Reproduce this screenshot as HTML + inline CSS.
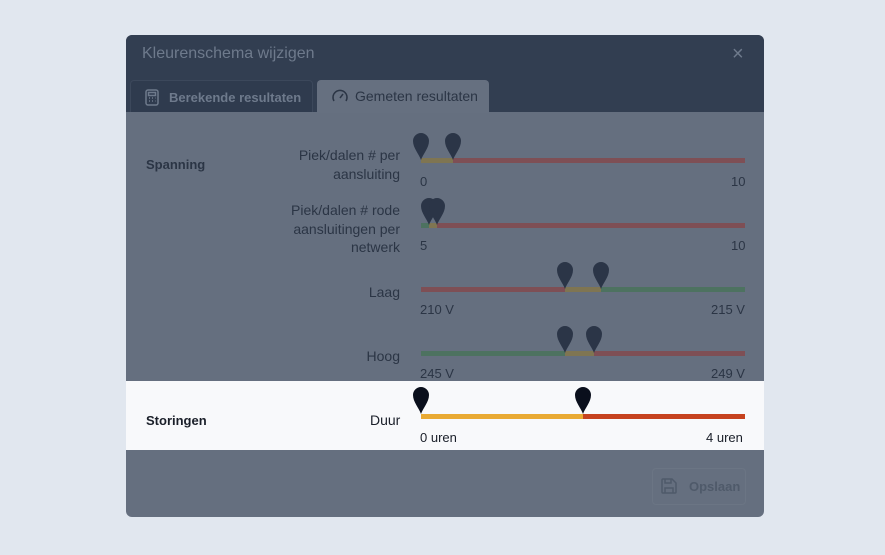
<!DOCTYPE html>
<html><head><meta charset="utf-8"><style>
*{margin:0;padding:0;box-sizing:border-box}
body{width:885px;height:555px;background:#e1e7ef;font-family:"Liberation Sans",sans-serif;position:relative;overflow:hidden}
.m{position:absolute;left:126px;top:35px;width:638px;height:482px;background:#656f7f;border-radius:6px;overflow:hidden}
.hd{position:absolute;left:0;top:0;width:638px;height:77px;background:#323e51}
.t{position:absolute;font-size:13px;color:#2b3545;white-space:nowrap}
.bar{position:absolute;height:5px}
.r{text-align:right;line-height:18.5px;font-size:14px}
</style></head><body>
<div class="m">
<div class="hd"></div>
<div class="t" style="left:16px;top:10px;font-size:16px;color:#6e7a8c">Kleurenschema wijzigen</div>
<div class="t" style="left:606px;top:8px;font-size:20px;color:#6e7a8c">×</div>
<div style="position:absolute;left:4px;top:45px;width:183px;height:32px;border:1px solid #3c485b;border-bottom:none;border-radius:4px 4px 0 0;background:#2f3b4e"></div>
<svg style="position:absolute;left:19px;top:54px" width="14" height="17" viewBox="0 0 14 17" fill="none" stroke="#6e7a8c" stroke-width="1.5"><rect x="1" y="1" width="12" height="15" rx="2"/><rect x="3.5" y="3.5" width="7" height="3"/><path d="M4 9h1M7 9h1M10 9h0.5M4 12h1M7 12h1M10 12h0.5"/></svg>
<div class="t" style="left:43px;top:55px;color:#6e7a8c;font-weight:bold">Berekende resultaten</div>
<div style="position:absolute;left:191px;top:45px;width:172px;height:33px;background:#667080;border-radius:4px 4px 0 0"></div>
<svg style="position:absolute;left:205px;top:54px" width="18" height="14" viewBox="0 0 18 14" fill="none" stroke="#2b3545" stroke-width="1.5"><path d="M3 12A7 7 0 1 1 15 12"/><path d="M9 9l3-4"/></svg>
<div class="t" style="left:229px;top:53px;font-size:14px">Gemeten resultaten</div>

<div class="t" style="left:20px;top:122px;font-weight:bold">Spanning</div>
<div class="t r" style="right:364px;top:111px">Piek/dalen # per<br>aansluiting</div>
<div class="t r" style="right:364px;top:166px">Piek/dalen # rode<br>aansluitingen per<br>netwerk</div>
<div class="t r" style="right:364px;top:248px">Laag</div>
<div class="t r" style="right:364px;top:312px">Hoog</div>

<div class="bar" style="left:295px;top:123px;width:32px;background:#7f7552"></div>
<div class="bar" style="left:327px;top:123px;width:292px;background:#7e4f55"></div>
<div class="t" style="left:294px;top:139px">0</div><div class="t" style="left:605px;top:139px">10</div>

<div class="bar" style="left:295px;top:188px;width:8px;background:#4d7260"></div>
<div class="bar" style="left:303px;top:188px;width:8px;background:#7f7552"></div>
<div class="bar" style="left:311px;top:188px;width:308px;background:#7e4f55"></div>
<div class="t" style="left:294px;top:203px">5</div><div class="t" style="left:605px;top:203px">10</div>

<div class="bar" style="left:295px;top:252px;width:144px;background:#7e4f55"></div>
<div class="bar" style="left:439px;top:252px;width:36px;background:#7f7552"></div>
<div class="bar" style="left:475px;top:252px;width:144px;background:#4d7260"></div>
<div class="t" style="left:294px;top:267px">210 V</div><div class="t" style="left:585px;top:267px">215 V</div>

<div class="bar" style="left:295px;top:316px;width:144px;background:#4d7260"></div>
<div class="bar" style="left:439px;top:316px;width:29px;background:#7f7552"></div>
<div class="bar" style="left:468px;top:316px;width:151px;background:#7e4f55"></div>
<div class="t" style="left:294px;top:331px">245 V</div><div class="t" style="left:585px;top:331px">249 V</div>

<div style="position:absolute;left:0;top:346px;width:638px;height:69px;background:#f8f9fb"></div>
<div class="t" style="left:20px;top:378px;font-weight:bold;color:#1a1f29">Storingen</div>
<div class="t" style="left:244px;top:377px;color:#1a1f29;font-size:14px">Duur</div>
<div class="bar" style="left:295px;top:379px;width:162px;background:#e9aa33"></div>
<div class="bar" style="left:457px;top:379px;width:162px;background:#c6421f"></div>
<div class="t" style="left:294px;top:395px;color:#1a1f29">0 uren</div><div class="t" style="left:580px;top:395px;color:#1a1f29">4 uren</div>

<div style="position:absolute;left:526px;top:433px;width:94px;height:37px;border:1px solid #6b7584;border-radius:4px"></div>
<svg style="position:absolute;left:535px;top:443px" width="16" height="16" viewBox="0 0 16 16" fill="none" stroke="#4f5a6a" stroke-width="1.5"><path d="M2 1h9l4 4v9a1 1 0 0 1-1 1H2a1 1 0 0 1-1-1V2a1 1 0 0 1 1-1z"/><path d="M4 1v4h6V1M4 15v-5h8v5"/></svg>
<div class="t" style="left:563px;top:444px;color:#4f5a6a;font-weight:bold">Opslaan</div>
</div>
<svg width="885" height="555" style="position:absolute;left:0;top:0">
<defs><path id="p" d="M0 0C-2-6-8-12-8-19A8 8 0 0 1 8-19C8-12 2-6 0 0Z"/></defs>
<g fill="#2b3547">
<use href="#p" x="421" y="160"/><use href="#p" x="453" y="160"/>
<use href="#p" x="429" y="225"/><use href="#p" x="437" y="225"/>
<use href="#p" x="565" y="289"/><use href="#p" x="601" y="289"/>
<use href="#p" x="565" y="353"/><use href="#p" x="594" y="353"/>
</g>
<g fill="#0a0f1c"><use href="#p" x="421" y="414"/><use href="#p" x="583" y="414"/></g>
</svg>
</body></html>
